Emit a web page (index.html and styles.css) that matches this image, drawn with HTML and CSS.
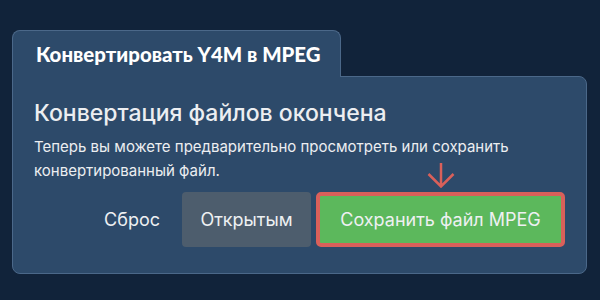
FILE: index.html
```html
<!DOCTYPE html>
<html lang="ru">
<head>
    <meta charset="UTF-8">
    <meta name="viewport" content="width=device-width, initial-scale=1.0">
    <title>Конвертировать Y4M в MPEG</title>
    <link rel="stylesheet" href="styles.css">
</head>
<body>
    <div class="card">
        <div class="tab">Конвертировать Y4M в MPEG</div>
        <div class="panel">
            <h2 class="panel-title">Конвертация файлов окончена</h2>
            <p class="panel-text">Теперь вы можете предварительно просмотреть или сохранить конвертированный файл.</p>
            <div class="actions">
                <button class="btn btn-link">Сброс</button>
                <button class="btn btn-grey">Открытым</button>
                <div class="save-wrap">
                    <svg class="arrow" width="28" height="27" viewBox="0 0 28 27">
                        <path d="M14 2 V25.5 M1.5 13 L14 25.5 L26.5 13" fill="none" stroke="#d9605a" stroke-width="2.5"/>
                    </svg>
                    <button class="btn btn-save">Сохранить файл MPEG</button>
                </div>
            </div>
        </div>
    </div>
</body>
</html>
```

FILE: styles.css
```css
body {
    margin: 0;
    padding: 30px 13px 0 12px;
    background-color: #11233a;
    font-family: Inter, "Noto Sans", sans-serif;
    color: #eceff3;
}

.card {
    display: flex;
    flex-direction: column;
    align-items: flex-start;
}

.tab {
    position: relative;
    z-index: 1;
    box-sizing: border-box;
    width: 329px;
    height: 47px;
    margin-bottom: -1px;
    padding: 11px 0 0 23px;
    background-color: #2d4a6a;
    border: 1px solid #4b6889;
    border-bottom: none;
    border-radius: 8px 8px 0 0;
    font-family: Lato, sans-serif;
    font-weight: 900;
    font-size: 20.4px;
    letter-spacing: 0;
    color: #ffffff;
}

.panel {
    box-sizing: border-box;
    width: 575px;
    height: 198px;
    padding: 21px 21px 0 21px;
    background-color: #2d4a6a;
    border: 1px solid #4b6889;
    border-radius: 0 8px 8px 8px;
}

.panel-title {
    margin: 0;
    font-size: 23px;
    line-height: 30px;
    font-weight: 500;
    color: #eceef1;
}

.panel-text {
    margin: 7px 0 0 0;
    font-size: 15px;
    line-height: 24px;
    color: #eceef1;
}

.actions {
    display: flex;
    justify-content: flex-end;
    align-items: flex-end;
    gap: 5px;
    margin-top: -22px;
}

.btn {
    box-sizing: border-box;
    height: 55px;
    border: none;
    border-radius: 4px;
    font-family: Inter, "Noto Sans", sans-serif;
    font-size: 18px;
    color: #eef0f2;
    cursor: pointer;
}

.btn-link {
    margin-right: 17px;
    padding: 0;
    background: none;
}

.btn-grey {
    width: 129px;
    background-color: #4d5d6d;
}

.save-wrap {
    display: flex;
    flex-direction: column;
    align-items: center;
    gap: 4px;
}

.btn-save {
    width: 249px;
    background-color: #5cb85c;
    border: 4px solid #d9605a;
    border-radius: 5px;
}
```
